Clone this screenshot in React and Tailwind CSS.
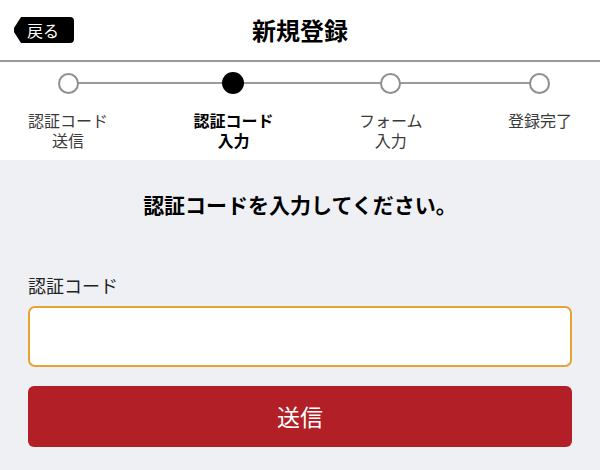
const steps = [
  { lines: ["認証コード", "送信"], active: false },
  { lines: ["認証コード", "入力"], active: true },
  { lines: ["フォーム", "入力"], active: false },
  { lines: ["登録完了"], active: false },
];

const font = { fontFamily: '"Noto Sans CJK JP", "Noto Sans", sans-serif' };

const BackButton = () => (
  <button className="flex items-center h-[26px]">
    <svg width="8" height="26" viewBox="0 0 8 26" className="block">
      <polygon points="8,0 1,11 1,15 8,26" fill="#000" />
    </svg>
    <span className="h-[26px] w-[53px] flex items-center pl-[6px] bg-black text-white text-[16px] leading-none rounded-r-[4px]">
      戻る
    </span>
  </button>
);

const StepBar = () => (
  <div className="relative bg-white px-7 pt-[10px] pb-[10px]">
    {/* connecting line */}
    <div className="absolute top-[20px] left-[68px] right-[60px] h-[2px] bg-[#9a9a9a]" />
    <div className="flex justify-between">
      {steps.map((s, i) => (
        <div key={i} className="flex flex-col items-center">
          <div className="h-[22px] flex items-center justify-center">
            {s.active ? (
              <div className="relative w-[22px] h-[22px] rounded-full bg-black" />
            ) : (
              <div className="relative w-[21px] h-[21px] rounded-full bg-white border-2 border-[#8e8e8e]" />
            )}
          </div>
          <p
            className={`mt-4 min-h-[40px] text-[16px] leading-[20px] text-center ${
              s.active ? "font-bold text-black" : "text-[#3a3a3a]"
            }`}
          >
            {s.lines[0]}
            {s.lines[1] && (
              <>
                <br />
                {s.lines[1]}
              </>
            )}
          </p>
        </div>
      ))}
    </div>
  </div>
);

export default function App() {
  return (
    <div className="min-h-[470px] flex flex-col bg-white" style={font}>
      {/* Header */}
      <header className="h-[62px] grid grid-cols-[1fr_auto_1fr] items-center border-b-2 border-[#9a9a9a] bg-white">
        <div className="pl-[13px] flex">
          <BackButton />
        </div>
        <h1 className="text-[24px] font-bold text-black leading-none">新規登録</h1>
        <div />
      </header>

      <StepBar />

      {/* Form area */}
      <main className="flex-1 bg-[#eff0f4] px-7 pt-[30px] pb-6">
        <p className="text-center text-[21px] leading-[28px] font-bold text-black">
          認証コードを入力してください。
        </p>
        <label className="block mt-[54px] text-[18px] leading-[26px] text-[#222]">
          認証コード
        </label>
        <input
          type="text"
          className="mt-2 block w-full h-[61px] bg-white border-2 border-[#e6a232] rounded-[7px] px-3 text-[18px] outline-none"
        />
        <button className="mt-[19px] w-full h-[61px] bg-[#b21f27] rounded-[6px] text-white text-[23px]">
          送信
        </button>
      </main>
    </div>
  );
}
